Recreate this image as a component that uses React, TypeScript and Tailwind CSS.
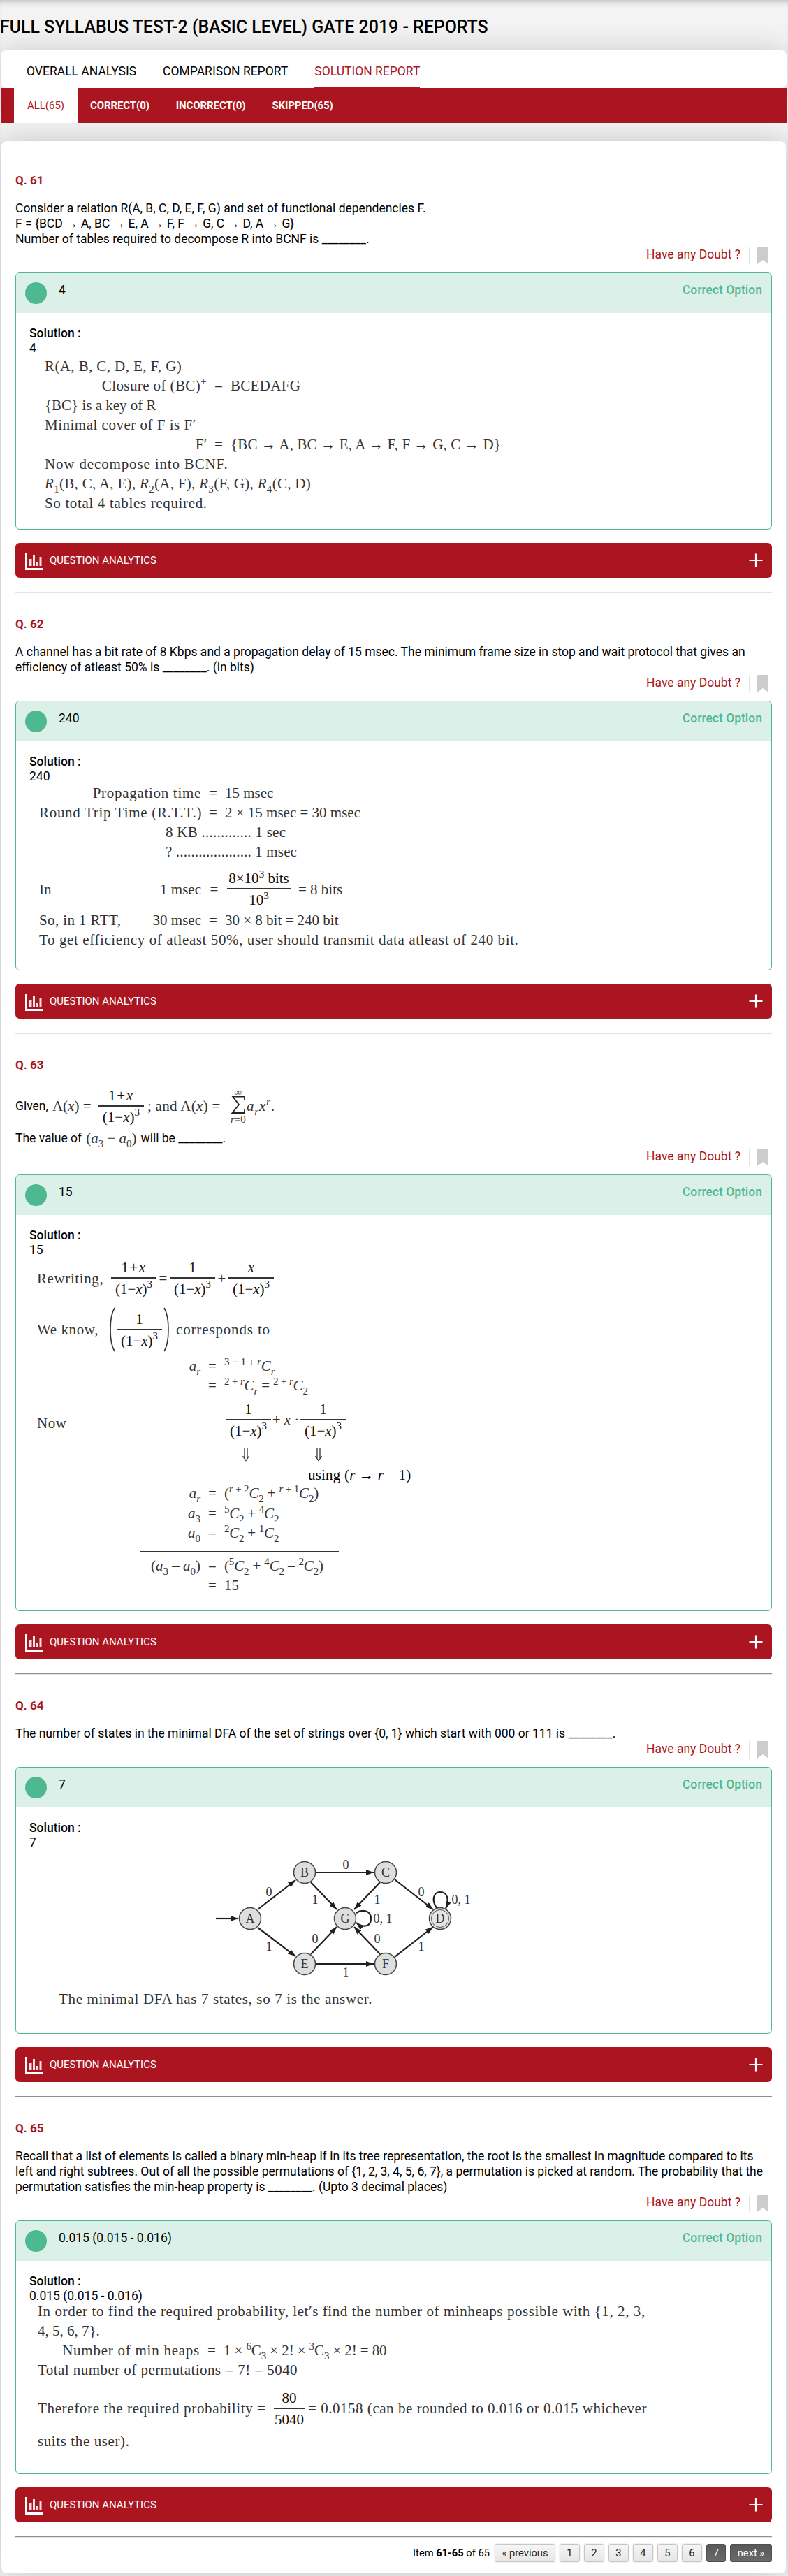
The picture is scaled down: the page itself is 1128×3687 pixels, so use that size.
import React, { ReactNode } from "react";

const Sub = ({ children }: { children: ReactNode }) => (
  <span className="relative top-[6px] text-[15px] leading-[0]">{children}</span>
);
const Sup = ({ children }: { children: ReactNode }) => (
  <span className="relative -top-[8px] text-[15px] leading-[0]">{children}</span>
);
const I = ({ children }: { children: ReactNode }) => <i>{children}</i>;

function Frac({ n, d, w = "w-[65px]" }: { n: ReactNode; d: ReactNode; w?: string }) {
  return (
    <span className={`flex shrink-0 flex-col items-center whitespace-nowrap leading-[22px] text-[#111] ${w}`}>
      <span>{n}</span>
      <span className="mt-[3px] mb-1 h-[2px] w-full bg-[#333]" />
      <span>{d}</span>
    </span>
  );
}

const OneMinusX = (
  <>
    (1−<I>x</I>)<span className="relative -top-[9px] text-[15px] leading-[0]">3</span>
  </>
);

const OnePlusX = (
  <span className="tracking-[1.500px]">
    1+<I>x</I>
  </span>
);

/* Equation row: right-aligned left side, equals sign, right side. */
function Eq({ l, r, lw, className = "" }: { l?: ReactNode; r: ReactNode; lw: string; className?: string }) {
  return (
    <div className={`flex h-7 items-center whitespace-nowrap ${className}`}>
      <span className={`shrink-0 text-right ${lw}`}>{l}</span>
      <span className="w-[34px] shrink-0 text-center">=</span>
      <span>{r}</span>
    </div>
  );
}

const Blank = () => <>________</>;

function Doubt() {
  return (
    <div className="flex h-[25px] items-start justify-end pr-[5px]">
      <span className="mr-3 leading-[22px] text-[#aa1520]">Have any Doubt ?</span>
      <span className="mr-[11px] h-[25px] w-px bg-[#e3e3e3]" />
      <svg width="16" height="25" viewBox="0 0 16 25">
        <path d="M0 0H16V25L8 19L0 25Z" fill="#ccc" />
      </svg>
    </div>
  );
}

function Analytics() {
  return (
    <div className="mt-[19px] flex h-[50px] items-center rounded-md bg-[#aa1520] pr-[13px] pl-[14px] text-[15px] text-white">
      <svg width="25" height="25" viewBox="0 0 25 25" fill="#fff" className="mt-[3px]">
        <rect x="0" y="0" width="3" height="25" />
        <rect x="0" y="22" width="25" height="3" />
        <g fillOpacity="0.880">
          <rect x="6" y="9" width="3.500" height="10" />
          <rect x="11" y="3" width="3" height="16" />
          <rect x="15.500" y="13" width="3.500" height="6" />
          <rect x="20.500" y="6" width="3" height="13" />
        </g>
      </svg>
      <span className="ml-[10px]">QUESTION ANALYTICS</span>
      <svg width="20" height="20" viewBox="0 0 20 20" className="ml-auto">
        <path d="M10 0.500V19.500M0.500 10H19.500" stroke="#fff" strokeWidth="2.200" />
      </svg>
    </div>
  );
}

interface QProps {
  no: number;
  text: ReactNode;
  answer: string;
  height: string;
  children: ReactNode;
  first?: boolean;
}

function Question({ no, text, answer, height, children, first }: QProps) {
  return (
    <section className={first ? "pt-[45px]" : "pt-[33px]"}>
      <h3 className="text-[17px] font-bold text-[#aa1520]">Q. {no}</h3>
      <div className="mt-[18px]">{text}</div>
      <Doubt />
      <div className={`mt-3 rounded-md border border-[#4eb890] ${height}`}>
        <div className="flex h-[57px] items-start rounded-t-md bg-[#dbf0e8] px-[13px]">
          <span className="mt-[13px] h-[31px] w-[31px] rounded-full bg-[#4eb890]" />
          <span className="mt-[13px] ml-[17px]">{answer}</span>
          <span className="mt-[13px] ml-auto font-medium text-[#4eb890]">Correct Option</span>
        </div>
        <div className="mt-[18px] pl-[19px] font-medium">Solution :</div>
        <div className="h-5 pl-[19px] leading-5">{answer}</div>
        <div className="font-['Liberation_Serif',serif] text-[21px] leading-7 text-[#333]">{children}</div>
      </div>
      <Analytics />
      <div className="mt-5 h-[2px] border-t border-t-[#8f8f8f] bg-[#e4e4e4]" />
    </section>
  );
}

const nodes: [string, number, number][] = [
  ["A", 335, 99],
  ["B", 413, 33],
  ["C", 529, 33],
  ["G", 471, 99],
  ["D", 607, 99],
  ["E", 413, 164],
  ["F", 529, 164],
];

const edges: [number, number, number, number][] = [
  [286, 99, 318, 99],
  [346, 86, 400, 44],
  [346, 112, 400, 153],
  [430, 33, 512, 33],
  [430, 164, 512, 164],
  [422, 47, 459, 86],
  [521, 47, 484, 86],
  [422, 150, 459, 111],
  [521, 150, 484, 111],
  [542, 43, 597, 86],
  [542, 154, 597, 111],
];

const labels: [string, number, number][] = [
  ["0", 362, 67],
  ["1", 362, 145],
  ["0", 472, 28],
  ["1", 472, 182],
  ["1", 428, 78],
  ["1", 517, 78],
  ["0", 428, 134],
  ["0", 517, 134],
  ["0", 580, 67],
  ["1", 580, 145],
  ["0, 1", 525, 105],
  ["0, 1", 637, 78],
];

function Automaton() {
  return (
    <svg width="700" height="200" viewBox="0 0 700 200" className="block font-['Liberation_Serif',serif]">
      <defs>
        <marker id="tip" viewBox="0 0 11 8" refX="11" refY="4" markerWidth="11" markerHeight="8" markerUnits="userSpaceOnUse" orient="auto">
          <path d="M0 0L11 4L0 8Z" fill="#231f20" />
        </marker>
      </defs>
      <g stroke="#231f20" strokeWidth="2.200" fill="none">
        {edges.map(([a, b, c, d], i) => (
          <line key={i} x1={a} y1={b} x2={c} y2={d} markerEnd="url(#tip)" />
        ))}
        <path d="M487 91C494 86 508 86 508 99C508 112 495 112 487 105" markerEnd="url(#tip)" />
        <path d="M602 84C594 72 598 61 607 61C618 61 620 72 615 85" markerEnd="url(#tip)" />
      </g>
      {nodes.map(([n, x, y]) => (
        <g key={n}>
          <circle cx={x} cy={y} r="15.500" fill="#dedede" stroke="#444" strokeWidth="1.500" />
          {n === "D" && <circle cx={x} cy={y} r="12.500" fill="#e4e4e4" stroke="#555" />}
          <text x={x} y={y + 6} textAnchor="middle" fontSize="18" fill="#333">{n}</text>
        </g>
      ))}
      {labels.map(([t, x, y], i) => (
        <text key={i} x={x} y={y} textAnchor="middle" fontSize="18" fill="#333">{t}</text>
      ))}
    </svg>
  );
}

function Paren({ flip }: { flip?: boolean }) {
  return (
    <svg width="9" height="64" viewBox="0 0 9 64" className={flip ? "-scale-x-100" : ""}>
      <path d="M8 1C0 14 0 50 8 63" fill="none" stroke="#333" strokeWidth="1.600" />
    </svg>
  );
}

function DownArrow() {
  return (
    <svg width="10" height="20" viewBox="0 0 10 20" fill="none" stroke="#333" strokeWidth="1.300">
      <path d="M3 0V15M7 0V15M0.500 12L5 18.500L9.500 12" />
    </svg>
  );
}

const pageBtn = "flex h-[26px] items-center justify-center rounded-[3px] border";
const lightBtn = "border-[#c6c6c6] bg-linear-to-b from-[#f6f6f6] to-[#e6e6e6] text-[#222] shadow-[0_0_2px_rgba(0,0,0,0.2)]";
const darkBtn = "border-[#505050] bg-linear-to-b from-[#585858] to-[#6a6a6a] text-white";

export default function App() {
  return (
    <div className="h-[3687px] overflow-hidden bg-[#f3f3f3] font-[Roboto,sans-serif] text-[17.500px] leading-[22px] text-black shadow-[inset_0_8px_10px_-6px_rgba(0,0,0,0.25)]">
      <h1 className="flex h-[72px] items-center pt-[5px] text-[24.900px] font-medium">
        FULL SYLLABUS TEST-2 (BASIC LEVEL) GATE 2019 - REPORTS
      </h1>

      <div className="relative z-10 mr-[2px] ml-px">
        <nav className="flex h-[54px] gap-[38px] rounded-lg bg-white pl-[37px] shadow-[0_0_40px_rgba(0,0,0,0.17)]">
          <span className="pt-[19px]">OVERALL ANALYSIS</span>
          <span className="pt-[19px]">COMPARISON REPORT</span>
          <span className="border-b-2 border-[#aa1520] pt-[19px] text-[#aa1520]">SOLUTION REPORT</span>
        </nav>
        <nav className="relative flex h-[50px] bg-[#aa1520] pl-[19px] text-[15px] leading-[50px] font-bold text-white">
          <span className="w-[91px] bg-white text-center font-normal text-[#aa1520]">ALL(65)</span>
          <span className="ml-[18px] tracking-[-0.100px]">CORRECT(0)</span>
          <span className="ml-[38px] tracking-[-0.100px]">INCORRECT(0)</span>
          <span className="ml-[38px] tracking-[-0.100px]">SKIPPED(65)</span>
        </nav>
      </div>

      <main className="mt-[26px] mr-[3px] ml-[2px] h-[3481px] rounded-lg bg-white pr-5 pl-5 shadow-[0_0_40px_rgba(0,0,0,0.2)]">
        <Question
          no={61}
          first
          answer="4"
          height="h-[368px]"
          text={
            <>
              Consider a relation R(A, B, C, D, E, F, G) and set of functional dependencies F.
              <br />F = {"{BCD → A, BC → E, A → F, F → G, C → D, A → G}"}
              <br />
              Number of tables required to decompose R into BCNF is <Blank />.
            </>
          }
        >
          <div className="pt-[2px] pl-[41px]">
            <div className="tracking-[0.400px]">R(A, B, C, D, E, F, G)</div>
            <Eq
              lw="w-[232px]"
              l={<span className="tracking-[0.400px]">Closure of (BC)<Sup>+</Sup></span>}
              r={<span className="tracking-[0.300px]">BCEDAFG</span>}
            />
            <div>{"{BC} is a key of R"}</div>
            <div className="tracking-[0.500px]">Minimal cover of F is F′</div>
            <Eq lw="w-[232px]" l="F′" r={<span className="tracking-[0.150px]">{"{BC → A, BC → E, A → F, F → G, C → D}"}</span>} />
            <div className="tracking-[0.850px]">Now decompose into BCNF.</div>
            <div className="tracking-[0.300px]">
              <I>R</I><Sub>1</Sub>(B, C, A, E), <I>R</I><Sub>2</Sub>(A, F), <I>R</I><Sub>3</Sub>(F, G), <I>R</I><Sub>4</Sub>(C, D)
            </div>
            <div className="tracking-[0.650px]">So total 4 tables required.</div>
          </div>
        </Question>

        <Question
          no={62}
          answer="240"
          height="h-[386px]"
          text={
            <>
              A channel has a bit rate of 8 Kbps and a propagation delay of 15 msec. The minimum frame size in stop and wait
              protocol that gives an
              <br />
              efficiency of atleast 50% is <Blank />. (in bits)
            </>
          }
        >
          <div className="pl-[33px]">
            <Eq lw="w-[232px]" l={<span className="tracking-[0.700px]">Propagation time</span>} r="15 msec" />
            <Eq lw="w-[232px]" l={<span className="tracking-[0.700px]">Round Trip Time (R.T.T.)</span>} r="2 × 15 msec = 30 msec" />
            <div className="pl-[181px] tracking-[0.250px]">8 KB ............. 1 sec</div>
            <div className="pl-[181px] tracking-[0.150px]">? .................... 1 msec</div>
            <div className="flex h-[70px] items-center pt-[9px] whitespace-nowrap">
              <span className="w-[60px]">In</span>
              <span className="w-[172px] text-right">1 msec</span>
              <span className="w-[37px] text-center">=</span>
              <Frac
                w="w-[91px]"
                n={<>8×10<Sup>3</Sup> bits</>}
                d={<>10<Sup>3</Sup></>}
              />
              <span className="ml-[11px]">= 8 bits</span>
            </div>
            <div className="flex h-7">
              <span className="w-[120px] whitespace-nowrap tracking-[0.400px]">So, in 1 RTT,</span>
              <Eq lw="w-[112px]" l="30 msec" r="30 × 8 bit = 240 bit" />
            </div>
            <div className="tracking-[0.600px]">To get efficiency of atleast 50%, user should transmit data atleast of 240 bit.</div>
          </div>
        </Question>

        <Question
          no={63}
          answer="15"
          height="h-[625px]"
          text={
            <>
              <div className="flex h-[60px] items-center whitespace-nowrap">
                Given,
                <span className="ml-[6px] flex items-center font-['Liberation_Serif',serif] text-[21px] text-[#333]">
                  <span className="w-[66px]">A(<I>x</I>) =</span>
                  <Frac n={OnePlusX} d={OneMinusX} />
                  <span className="ml-[5px] w-[118px] tracking-[0.300px]">; and A(<I>x</I>) =</span>
                  <span className="flex w-[24px] flex-col items-center">
                    <span className="text-[15px] leading-[10px]">∞</span>
                    <svg width="20" height="27" viewBox="0 0 20 27" fill="none" stroke="#222" strokeWidth="1.800">
                      <path d="M19 6V1.500H2L11 13L1.500 25H19V20" />
                    </svg>
                    <span className="text-[15px] leading-[14px]"><I>r</I>=0</span>
                  </span>
                  <span className="tracking-[0.800px]"><I>a</I><Sub><I>r</I></Sub><I>x</I><Sup><I>r</I></Sup>.</span>
                </span>
              </div>
              <div className="flex h-[31px] items-center">
                The value of
                <span className="mx-[6px] font-['Liberation_Serif',serif] text-[21px] text-[#333]">
                  (<I>a</I><Sub>3</Sub> − <I>a</I><Sub>0</Sub>)
                </span>
                will be <Blank />.
              </div>
            </>
          }
        >
          <div className="pl-[30px]">
            <div className="flex h-[61px] items-center">
              <span className="w-[106px] tracking-[0.600px]">Rewriting,</span>
              <Frac n={OnePlusX} d={OneMinusX} />
              <span className="w-[19px] text-center">=</span>
              <Frac n="1" d={OneMinusX} />
              <span className="w-[19px] text-center">+</span>
              <Frac n={<I>x</I>} d={OneMinusX} />
            </div>
            <div className="flex h-[81px] items-center pt-[5px]">
              <span className="w-[103px] tracking-[0.600px]">We know,</span>
              <Paren />
              <span className="mx-[2px]"><Frac n="1" d={OneMinusX} /></span>
              <Paren flip />
              <span className="ml-[9px] tracking-[0.850px]">corresponds to</span>
            </div>
            <Eq lw="w-[234px]" l={<><I>a</I><Sub><I>r</I></Sub></>} r={<><Sup>3 − 1 + <I>r</I></Sup><I>C</I><Sub><I>r</I></Sub></>} />
            <Eq
              lw="w-[234px]"
              r={
                <span className="tracking-[-0.150px]">
                  <Sup>2 + <I>r</I></Sup><I>C</I><Sub><I>r</I></Sub> = <Sup>2 + <I>r</I></Sup><I>C</I><Sub>2</Sub>
                </span>
              }
            />
            <div className="flex h-[70px] items-center">
              <span className="w-[270px] pt-[10px] tracking-[0.500px]">Now</span>
              <Frac n="1" d={OneMinusX} />
              <span className="w-[42px] text-center">+ <I>x</I> ·</span>
              <Frac n="1" d={OneMinusX} />
            </div>
            <div className="flex h-[30px] items-center gap-[94px] pl-[294px]">
              <DownArrow />
              <DownArrow />
            </div>
            <div className="h-[26px] pl-[388px] tracking-[0.200px] text-black">using (<I>r</I> → <I>r</I> – 1)</div>
            <Eq
              className="mb-px"
              lw="w-[234px]"
              l={<><I>a</I><Sub><I>r</I></Sub></>}
              r={
                <span className="tracking-[-0.150px]">
                  (<Sup><I>r</I> + 2</Sup><I>C</I><Sub>2</Sub> + <Sup><I>r</I> + 1</Sup><I>C</I><Sub>2</Sub>)
                </span>
              }
            />
            <Eq lw="w-[234px]" l={<><I>a</I><Sub>3</Sub></>} r={<span className="tracking-[-0.250px]"><Sup>5</Sup><I>C</I><Sub>2</Sub> + <Sup>4</Sup><I>C</I><Sub>2</Sub></span>} />
            <Eq lw="w-[234px]" l={<><I>a</I><Sub>0</Sub></>} r={<span className="tracking-[-0.250px]"><Sup>2</Sup><I>C</I><Sub>2</Sub> + <Sup>1</Sup><I>C</I><Sub>2</Sub></span>} />
            <div className="mt-3 mb-[5px] ml-[147px] h-[2px] w-[285px] bg-[#333]" />
            <Eq
              lw="w-[234px]"
              l={<>(<I>a</I><Sub>3</Sub> – <I>a</I><Sub>0</Sub>)</>}
              r={
                <span className="tracking-[-0.150px]">
                  (<Sup>5</Sup><I>C</I><Sub>2</Sub> + <Sup>4</Sup><I>C</I><Sub>2</Sub> – <Sup>2</Sup><I>C</I><Sub>2</Sub>)
                </span>
              }
            />
            <Eq lw="w-[234px]" r="15" />
          </div>
        </Question>

        <Question
          no={64}
          answer="7"
          height="h-[382px]"
          text={
            <>
              The number of states in the minimal DFA of the set of strings over {"{0, 1}"} which start with 000 or 111 is <Blank />.
            </>
          }
        >
          <Automaton />
          <div className="pl-[61px] tracking-[0.650px]">The minimal DFA has 7 states, so 7 is the answer.</div>
        </Question>

        <Question
          no={65}
          answer="0.015 (0.015 - 0.016)"
          height="h-[363px]"
          text={
            <>
              Recall that a list of elements is called a binary min-heap if in its tree representation, the root is the smallest
              in magnitude compared to its
              <br />
              left and right subtrees. Out of all the possible permutations of {"{1, 2, 3, 4, 5, 6, 7}"}, a permutation is
              picked at random. The probability that the
              <br />
              permutation satisfies the min-heap property is <Blank />. (Upto 3 decimal places)
            </>
          }
        >
          <div className="-mt-[2px] pl-[31px] whitespace-nowrap">
            <div className="tracking-[0.580px]">
              In order to find the required probability, let′s find the number of minheaps possible with {"{1, 2, 3,"}
            </div>
            <div>{"4, 5, 6, 7}."}</div>
            <Eq
              lw="w-[232px]"
              l={<span className="tracking-[0.750px]">Number of min heaps</span>}
              r={<span className="tracking-[-0.100px]">1 × <Sup>6</Sup>C<Sub>3</Sub> × 2! × <Sup>3</Sup>C<Sub>3</Sub> × 2! = 80</span>}
            />
            <div className="tracking-[0.450px]">Total number of permutations = 7! = 5040</div>
            <div className="flex h-[74px] items-center pt-[8px]">
              <span className="w-[338px] tracking-[0.650px]">Therefore the required probability =</span>
              <Frac w="w-[44px]" n="80" d="5040" />
              <span className="ml-[5px] tracking-[0.530px]">= 0.0158 (can be rounded to 0.016 or 0.015 whichever</span>
            </div>
            <div className="tracking-[0.600px]">suits the user).</div>
          </div>
        </Question>

        <div className="mt-[9px] flex items-center justify-end gap-[6px] text-[14.700px]">
          <span className="mr-px">Item <b>61-65</b> of 65</span>
          <span className={`${pageBtn} ${lightBtn} w-[87px]`}>« previous</span>
          {[1, 2, 3, 4, 5, 6].map((n) => (
            <span key={n} className={`${pageBtn} ${lightBtn} w-[29px]`}>{n}</span>
          ))}
          <span className={`${pageBtn} ${darkBtn} w-[28px]`}>7</span>
          <span className={`${pageBtn} ${darkBtn} w-[60px]`}>next »</span>
        </div>
      </main>
    </div>
  );
}
